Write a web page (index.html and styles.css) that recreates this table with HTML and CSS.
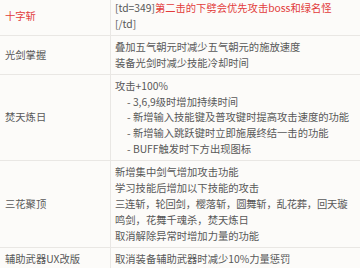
FILE: index.html
```html
<!DOCTYPE html>
<html lang="zh">
<head>
<meta charset="utf-8">
<link rel="stylesheet" href="styles.css">
</head>
<body>
<table class="tbl">
  <tr class="r1">
    <td class="name red">十字斩</td>
    <td class="desc">[td=349]<span class="red">第二击的下劈会优先攻击boss和绿名怪</span><br>[/td]</td>
  </tr>
  <tr>
    <td class="name">光剑掌握</td>
    <td class="desc">叠加五气朝元时减少五气朝元的施放速度<br>装备光剑时减少技能冷却时间</td>
  </tr>
  <tr>
    <td class="name">焚天炼日</td>
    <td class="desc">攻击+100%
      <div class="sub">- 3,6,9级时增加持续时间</div>
      <div class="sub">- 新增输入技能键及普攻键时提高攻击速度的功能</div>
      <div class="sub">- 新增输入跳跃键时立即施展终结一击的功能</div>
      <div class="sub">- BUFF触发时下方出现图标</div>
    </td>
  </tr>
  <tr>
    <td class="name">三花聚顶</td>
    <td class="desc">新增集中剑气增加攻击功能<br>学习技能后增加以下技能的攻击<br><span class="tight">三连斩，轮回剑，樱落斩，圆舞斩，乱花葬，回天璇</span><br>鸣剑，花舞千魂杀，焚天炼日<br>取消解除异常时增加力量的功能</td>
  </tr>
  <tr>
    <td class="name">辅助武器UX改版</td>
    <td class="desc">取消装备辅助武器时减少10%力量惩罚</td>
  </tr>
</table>
</body>
</html>
```

FILE: styles.css
```css
html, body {
  margin: 0;
  padding: 0;
  background: #fcfbf9;
}
body {
  font-family: "Noto Sans CJK SC", "Noto Sans", sans-serif;
  font-size: 10.3px;
  line-height: 15.9px;
  color: #585858;
}
.tbl {
  width: 360px;
  border-collapse: collapse;
  margin-top: -4px;
  table-layout: fixed;
}
.tbl td {
  border-top: 1px solid #e9e7e4;
  border-bottom: 1px solid #e9e7e4;
  padding: 3px 4px 3px 5px;
  vertical-align: middle;
}
.tbl td.name {
  width: 101px;
  border-right: 1px solid #e9e7e4;
}
.tbl td.desc {
  padding-left: 4px;
  padding-right: 0;
  white-space: nowrap;
}
.tight {
  letter-spacing: -0.2px;
}
.red {
  color: #e23b3b;
}
.sub {
  padding-left: 12px;
}
```
